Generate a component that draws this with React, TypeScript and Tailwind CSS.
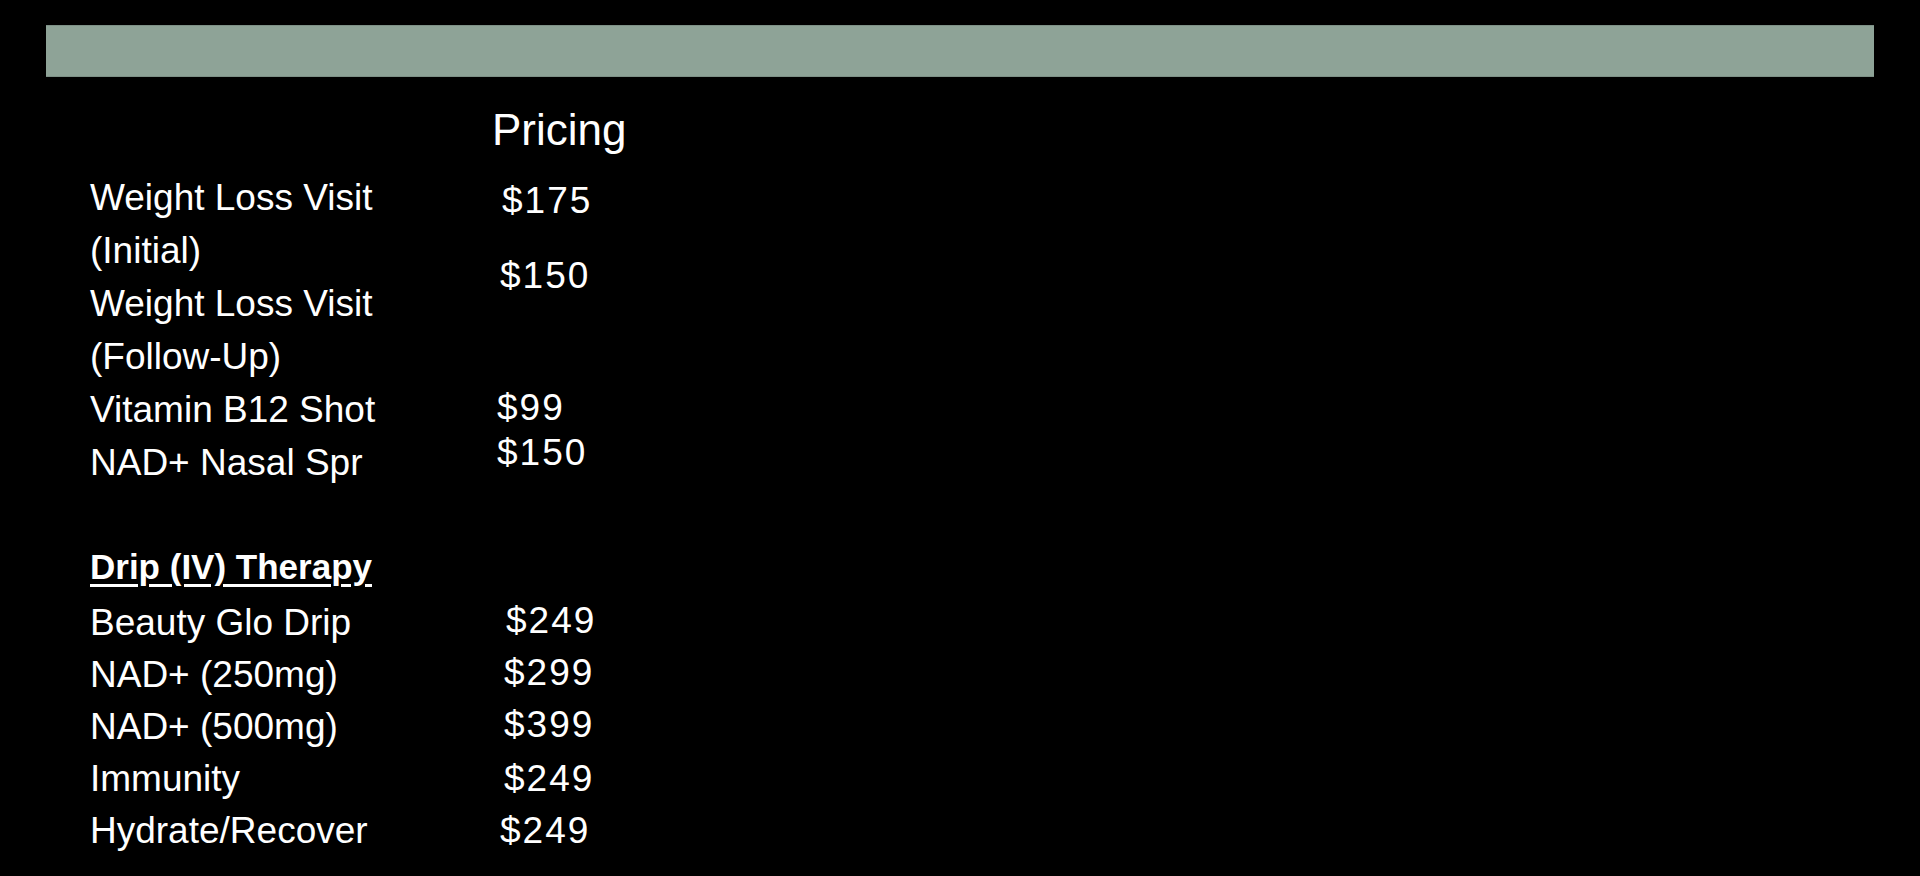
import React from 'react';

type Item = {
  lines: string[];
  price: string;
  priceShift: string;
};

const visits: Item[] = [
  { lines: ['Weight Loss Visit', '(Initial)'], price: '$175', priceShift: 'ml-[2px] mt-[3px]' },
  { lines: ['Weight Loss Visit', '(Follow-Up)'], price: '$150', priceShift: 'ml-0 -mt-[28px]' },
  { lines: ['Vitamin B12 Shot'], price: '$99', priceShift: '-ml-[3px] -mt-[2px]' },
  { lines: ['NAD+ Nasal Spr'], price: '$150', priceShift: '-ml-[3px] -mt-[10px]' },
];

const drips: Item[] = [
  { lines: ['Beauty Glo Drip'], price: '$249', priceShift: 'ml-[6px] -mt-[2px]' },
  { lines: ['NAD+ (250mg)'], price: '$299', priceShift: 'ml-[4px] -mt-[2px]' },
  { lines: ['NAD+ (500mg)'], price: '$399', priceShift: 'ml-[4px] -mt-[2px]' },
  { lines: ['Immunity'], price: '$249', priceShift: 'ml-[4px]' },
  { lines: ['Hydrate/Recover'], price: '$249', priceShift: 'ml-0' },
];

function PriceRow({ item, lineHeight }: { item: Item; lineHeight: string }) {
  return (
    <div className={`grid grid-cols-[410px_auto] ${lineHeight}`}>
      <div>
        {item.lines.map((l) => (
          <div key={l}>{l}</div>
        ))}
      </div>
      <div className={`tracking-[2px] ${item.priceShift}`}>{item.price}</div>
    </div>
  );
}

export default function App() {
  return (
    <div className="min-h-screen bg-black text-white font-['Liberation_Sans',Arial,sans-serif] pt-[25px] px-[46px]">
      {/* Header bar */}
      <div className="h-[52px] w-[1828px] bg-[#8ea397] border-y border-[#7d9086]" />

      <div className="pl-[44px]">
        {/* Heading */}
        <div className="mt-[26px] pl-[402px] text-[44px] leading-[53px]">Pricing</div>

        {/* Visits */}
        <div className="mt-[15px] text-[37px]">
          {visits.map((item) => (
            <PriceRow key={item.lines.join(' ') + item.price} item={item} lineHeight="leading-[53px]" />
          ))}
        </div>

        {/* Drip section */}
        <div className="mt-[51px] text-[35px] font-bold leading-[53px]">
          <span className="underline decoration-[3px] underline-offset-[5px]">Drip (IV) Therapy</span>
        </div>
        <div className="mt-[4px] text-[37px]">
          {drips.map((item) => (
            <PriceRow key={item.lines.join(' ') + item.price} item={item} lineHeight="leading-[52px]" />
          ))}
        </div>
      </div>
    </div>
  );
}
